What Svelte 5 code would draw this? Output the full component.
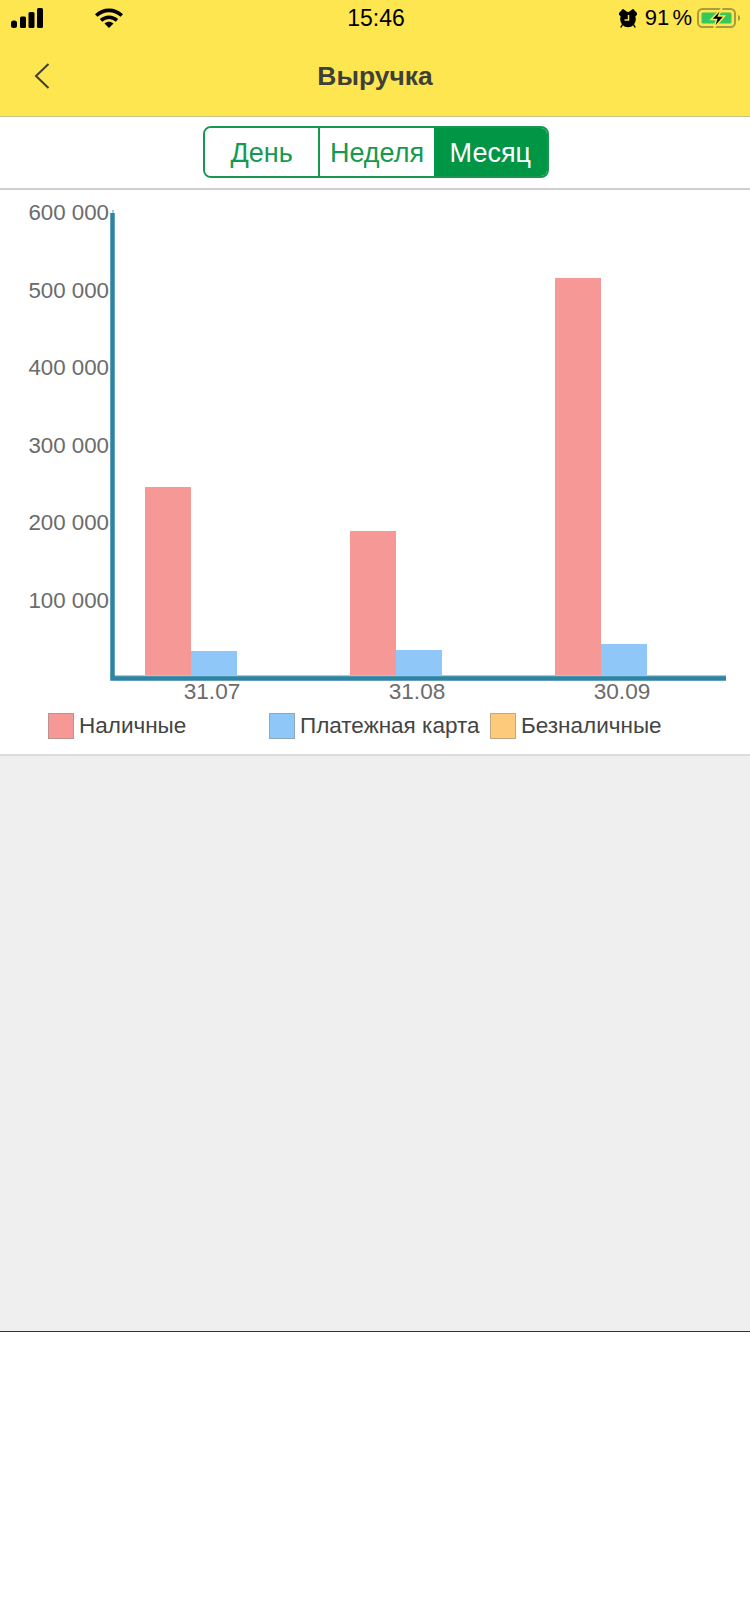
<script>
  const ticks = ['600 000', '500 000', '400 000', '300 000', '200 000', '100 000'];
  const groups = [
    { date: '31.07', x: 145, cash: 487, card: 651 },
    { date: '31.08', x: 350, cash: 531, card: 650 },
    { date: '30.09', x: 555, cash: 278, card: 644 }
  ];
  const legend = [
    { name: 'Наличные', color: '#f69896' },
    { name: 'Платежная карта', color: '#8fc7f9' },
    { name: 'Безналичные', color: '#fdc97a' }
  ];
  const tabs = ['День', 'Неделя', 'Месяц'];
  let active = $state(2);
  const base = 677;
</script>

<div class="page">
  <header class="top">
    <div class="status">
      <div class="status-left">
        <svg width="32" height="20" viewBox="0 0 32 20">
          <rect x="0" y="12.500" width="6" height="7.500" rx="2.500" />
          <rect x="9" y="8.500" width="6" height="11.500" rx="1.500" />
          <rect x="17.500" y="4" width="6" height="16" rx="1.500" />
          <rect x="26" y="0" width="6" height="20" rx="1.500" />
        </svg>
        <svg width="28" height="20" viewBox="0 0 28 20">
          <path d="M1.200 7.500C8.500 .6 19.500 .6 26.800 7.500" fill="none" stroke="#000" stroke-width="3.600" />
          <path d="M6 12.300C10.800 8.200 17.200 8.200 22 12.300" fill="none" stroke="#000" stroke-width="3.600" />
          <path d="M9.500 15.500C12.200 13.300 15.800 13.300 18.500 15.500L14 20Z" />
        </svg>
      </div>
      <div class="time">15:46</div>
      <div class="status-right">
        <svg class="alarm" width="18" height="19" viewBox="0 0 18 19">
          <circle cx="9" cy="10.500" r="7.800" />
          <path d="M.2 5 4 .8 6.800 2.800 2.500 7.200ZM17.800 5 14 .8 11.200 2.800 15.500 7.200ZM3.500 15.500 1.800 18.500M14.500 15.500 16.200 18.500" stroke="#000" stroke-width="1.500" />
          <path d="M9.500 6V11H5.500" fill="none" stroke="#fde64f" stroke-width="1.500" />
        </svg>
        <span class="pct">91 %</span>
        <svg width="44" height="20" viewBox="0 0 44 20">
          <rect x="1" y="1" width="37" height="18" rx="4.500" fill="none" stroke="#a89c3c" stroke-width="2" />
          <rect x="4.500" y="4.500" width="30" height="11" rx="1.500" fill="#35c95c" />
          <path d="M41 7C43.800 7.500 43.800 12.500 41 13Z" fill="#a89c3c" />
          <path d="M25 0 14 11.500H19.500L17 20 27.500 8H21.500Z" stroke="#fde64f" stroke-width="1.500" />
        </svg>
      </div>
    </div>
    <div class="nav">
      <svg class="back" width="16" height="26" viewBox="0 0 16 26">
        <path d="M14.500 1 2 13 14.500 25" fill="none" stroke="#3f3f3a" stroke-width="2" />
      </svg>
      <h1>Выручка</h1>
    </div>
  </header>

  <div class="toolbar">
    <div class="tabs">
      {#each tabs as t, i}
        <button class:on={active === i} onclick={() => (active = i)}>{t}</button>
      {/each}
    </div>
  </div>

  <section class="chart">
    <svg class="plot" width="750" height="518" viewBox="0 190 750 518">
      {#each ticks as t, i}
        <text class="tick" x="109" y={220 + i * 77.6} text-anchor="end">{t}</text>
      {/each}
      {#each groups as g}
        <rect x={g.x} y={g.cash} width="46" height={base - g.cash} fill="#f69896" />
        <rect x={g.x + 46} y={g.card} width="46" height={base - g.card} fill="#8fc7f9" />
        <text class="date" x={g.x + 67} y="699" text-anchor="middle">{g.date}</text>
      {/each}
      <path class="halo" d="M110 676H726M112.500 215 113 210" />
      <path class="axis" d="M112.500 213V678.500H726" />
    </svg>
    <div class="legend">
      {#each legend as l}
        <div class="item">
          <span class="swatch" style:background={l.color}></span>
          <span>{l.name}</span>
        </div>
      {/each}
    </div>
  </section>

  <div class="empty"></div>
  <div class="bottom"></div>
</div>

<style>
  :global(body) { margin: 0; background: #fff; }
  .page { width: 750px; height: 1623px; display: flex; flex-direction: column; font-family: "Liberation Sans", Arial, sans-serif; overflow: hidden; }
  .top { height: 117px; box-sizing: border-box; background: #fde64f; border-bottom: 1px solid #c9c28a; }
  .status { height: 36px; padding: 0 9px 0 11px; box-sizing: border-box; display: grid; grid-template-columns: 1fr auto 1fr; align-items: center; color: #000; }
  .status-left { display: flex; align-items: center; gap: 52px; }
  .status-right { display: flex; align-items: center; justify-content: flex-end; gap: 5px; }
  .alarm { margin-right: 3px; }
  .time { font-size: 23px; }
  .pct { font-size: 22px; word-spacing: -3px; }
  .nav { height: 80px; display: flex; align-items: center; justify-content: center; position: relative; }
  .back { position: absolute; left: 34px; top: 27px; }
  h1 { margin: 0; font-size: 26.400px; font-weight: 700; color: #3f3f3a; }
  .toolbar { height: 73px; box-sizing: border-box; padding: 9px 0 0 2px; display: flex; justify-content: center; border-bottom: 2px solid #cfcfcf; }
  .tabs { display: flex; width: 346px; height: 52px; box-sizing: border-box; border: 2px solid #16994f; border-radius: 8px; overflow: hidden; }
  button { flex: 1; margin: 0; padding: 3px 0 0; border: 0; border-left: 2px solid #16994f; background: #fff; color: #16994f; font: 27px "Liberation Sans", Arial, sans-serif; }
  button:first-child { border-left: 0; }
  button.on { background: #009646; color: #fff; border-left: 0; }
  .chart { height: 566px; box-sizing: border-box; border-bottom: 2px solid #dcdcdc; }
  .plot { display: block; }
  .tick { font-size: 22.300px; fill: #6b6b6b; }
  .date { font-size: 22.600px; fill: #6b6b6b; }
  .axis { fill: none; stroke: #2f83a3; stroke-width: 4.500; }
  .halo { stroke: #8fd0ea; stroke-width: 2; }
  .legend { display: grid; grid-template-columns: 221px 221px 221px; padding: 5px 0 0 48px; font-size: 22.500px; color: #444; }
  .item { display: flex; align-items: center; gap: 5px; }
  .swatch { width: 26px; height: 26px; box-sizing: border-box; border: 1px solid rgba(140, 140, 140, .55); }
  .empty { height: 576px; background: #efefef; border-bottom: 1px solid #333; box-sizing: border-box; }
  .bottom { flex: 1; background: #fff; }
</style>
